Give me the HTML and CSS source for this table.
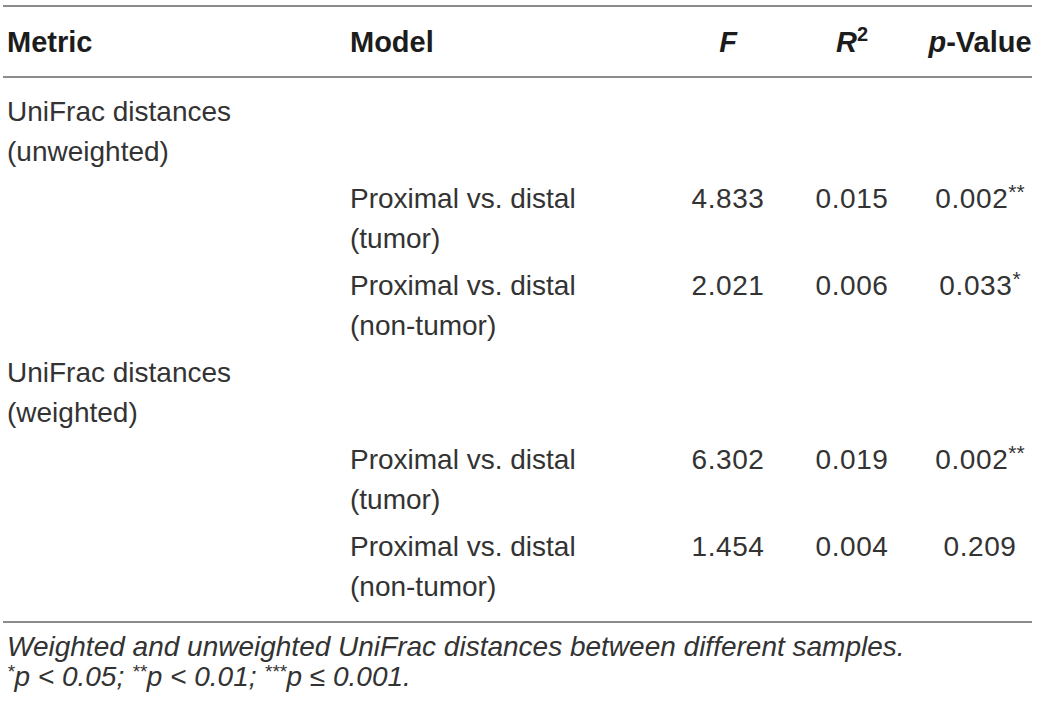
FILE: index.html
```html
<!DOCTYPE html>
<html lang="en">
<head>
<meta charset="utf-8">
<title>UniFrac distances</title>
<link rel="stylesheet" href="styles.css">
</head>
<body>
<div class="wrap">
  <table class="stats">
    <colgroup>
      <col class="c-metric">
      <col class="c-model">
      <col class="c-f">
      <col class="c-r">
      <col class="c-p">
    </colgroup>
    <thead>
      <tr>
        <th class="left">Metric</th>
        <th class="left">Model</th>
        <th class="num f"><i>F</i></th>
        <th class="num r"><i>R</i><sup>2</sup></th>
        <th class="num p"><i>p</i>-Value</th>
      </tr>
    </thead>
    <tbody>
      <tr class="first">
        <td>UniFrac distances<br>(unweighted)</td>
        <td></td><td class="num f"></td><td class="num r"></td><td class="num p"></td>
      </tr>
      <tr>
        <td></td>
        <td>Proximal vs. distal<br>(tumor)</td>
        <td class="num f">4.833</td>
        <td class="num r">0.015</td>
        <td class="num p">0.002<sup>**</sup></td>
      </tr>
      <tr>
        <td></td>
        <td>Proximal vs. distal<br>(non-tumor)</td>
        <td class="num f">2.021</td>
        <td class="num r">0.006</td>
        <td class="num p">0.033<sup>*</sup></td>
      </tr>
      <tr>
        <td>UniFrac distances<br>(weighted)</td>
        <td></td><td class="num f"></td><td class="num r"></td><td class="num p"></td>
      </tr>
      <tr>
        <td></td>
        <td>Proximal vs. distal<br>(tumor)</td>
        <td class="num f">6.302</td>
        <td class="num r">0.019</td>
        <td class="num p">0.002<sup>**</sup></td>
      </tr>
      <tr class="last">
        <td></td>
        <td>Proximal vs. distal<br>(non-tumor)</td>
        <td class="num f">1.454</td>
        <td class="num r">0.004</td>
        <td class="num p">0.209</td>
      </tr>
    </tbody>
  </table>
  <p class="caption">Weighted and unweighted UniFrac distances between different samples.<br><sup>*</sup>p &lt; 0.05; <sup>**</sup>p &lt; 0.01; <sup>***</sup>p &le; 0.001.</p>
</div>
</body>
</html>
```

FILE: styles.css
```css
html, body {
  margin: 0;
  padding: 0;
  background: #ffffff;
}

.wrap {
  padding: 5px 7px 0 3px;
  font-family: "Liberation Sans", Arial, sans-serif;
  color: #333333;
}

.stats {
  width: 1029px;
  border-collapse: collapse;
  table-layout: fixed;
  border-top: 2px solid #8c8c8c;
  border-bottom: 2px solid #8c8c8c;
}

.c-metric { width: 343px; }
.c-model { width: 334px; }
.c-f { width: 96px; }
.c-r { width: 152px; }
.c-p { width: 104px; }

.stats th {
  font-size: 29px;
  font-weight: bold;
  line-height: 40px;
  color: #1c1c1c;
  padding: 15px 4px 14px 4px;
  border-bottom: 2px solid #8c8c8c;
  text-align: left;
  vertical-align: top;
}

.stats th sup {
  font-size: 20px;
  line-height: 0;
  vertical-align: 11px;
}

.stats td {
  font-size: 28px;
  line-height: 40px;
  padding: 4px 4px 3px 4px;
  vertical-align: top;
  text-align: left;
  color: #333333;
}

.stats th.num, .stats td.num {
  text-align: center;
  padding-left: 0;
  padding-right: 0;
}

.stats td.num {
  letter-spacing: 0.6px;
}

.stats .r {
  padding-right: 10px;
}

.stats td sup {
  font-size: 21px;
  line-height: 0;
  letter-spacing: 0;
  vertical-align: 9px;
}

.stats tr.first td {
  padding-top: 14px;
}

.stats tr.last td {
  padding-bottom: 14px;
}

.caption {
  margin: 0;
  padding: 9px 0 0 4px;
  font-size: 28px;
  font-style: italic;
  line-height: 30px;
  color: #333333;
}

.caption sup {
  font-size: 19px;
  line-height: 0;
  vertical-align: 8px;
}
```
